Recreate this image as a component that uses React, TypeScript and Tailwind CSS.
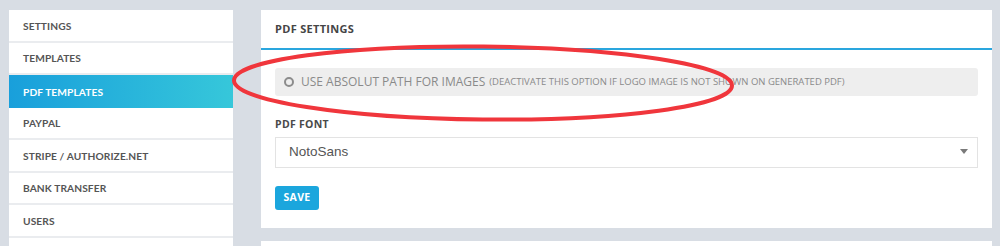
const menu = [
  'SETTINGS',
  'TEMPLATES',
  'PDF TEMPLATES',
  'PAYPAL',
  'STRIPE / AUTHORIZE.NET',
  'BANK TRANSFER',
  'USERS',
  '',
]

const Sidebar = () => (
  <aside
    className="w-[224px] shrink-0 bg-white self-start"
    style={{ fontFamily: 'Lato, "Open Sans", sans-serif' }}
  >
    {menu.map((item, i) => {
      const active = item === 'PDF TEMPLATES'
      return (
        <div
          key={i}
          className={`h-[32.5px] flex items-center pl-[14px] pt-[2px] text-[10.2px] font-bold tracking-[0.1px] ${
            active
              ? 'bg-gradient-to-r from-[#199fdb] to-[#36c7da] text-white'
              : 'text-[#555] border-b-2 border-[#eaecef]'
          }`}
        >
          {item}
        </div>
      )
    })}
  </aside>
)

export default function App() {
  return (
    <div
      className="relative w-[1000px] h-[246px] overflow-hidden bg-[#d8dde4] flex gap-[28px] pl-[9px] pt-[10px]"
      style={{ fontFamily: '"Open Sans", "Liberation Sans", sans-serif' }}
    >
      <Sidebar />

      <div className="w-[731px] flex flex-col gap-[13px]">
        <section className="bg-white h-[218px] shrink-0">
          <div className="h-[40px] flex items-center px-[14px] pt-[1px] border-b-2 border-[#2aa6de] text-[11px] font-bold text-[#454545] tracking-[0.3px]">
            PDF SETTINGS
          </div>

          <div className="px-[14px] pt-[18px]">
            <div className="h-[28px] bg-[#eeeeee] rounded-[3px] flex items-center pl-[9px] text-[#8a8a8a]">
              <span className="w-[10px] h-[10px] rounded-full border-2 border-[#8c8c8c] mr-[7px]" />
              <span className="text-[12px]">USE ABSOLUT PATH FOR IMAGES</span>
              <span className="text-[9.5px] ml-[4px]">
                (DEACTIVATE THIS OPTION IF LOGO IMAGE IS NOT SHOWN ON GENERATED PDF)
              </span>
            </div>

            <div className="mt-[23px] text-[10.5px] font-bold text-[#4a4a4a] tracking-[0.3px] leading-none">
              PDF FONT
            </div>

            <div className="mt-[7px] h-[31px] border border-[#e3e3e3] flex items-center justify-between pl-[13px] pr-[8px]">
              <span
                className="text-[13.5px] text-[#555]"
                style={{ fontFamily: '"Liberation Sans", Arial, sans-serif' }}
              >
                NotoSans
              </span>
              <svg width="8" height="6" viewBox="0 0 8 6" className="mr-[1px]">
                <path d="M0 0 L8 0 L4 5 Z" fill="#7a7a7a" />
              </svg>
            </div>

            <button className="mt-[18px] w-[44px] h-[24px] bg-[#1ba6dd] rounded-[3px] text-white text-[10.5px] font-bold tracking-[0.3px] flex items-center justify-center">
              SAVE
            </button>
          </div>
        </section>

        <section className="bg-white h-[20px] shrink-0" />
      </div>

      {/* red hand-drawn annotation */}
      <svg
        className="absolute left-0 top-0 pointer-events-none"
        width="1000"
        height="246"
        viewBox="0 0 1000 246"
      >
        <ellipse
          cx="483"
          cy="83"
          rx="249"
          ry="36.5"
          fill="none"
          stroke="#f0363c"
          strokeWidth="4"
          transform="rotate(0.6 483 83)"
        />
      </svg>
    </div>
  )
}
